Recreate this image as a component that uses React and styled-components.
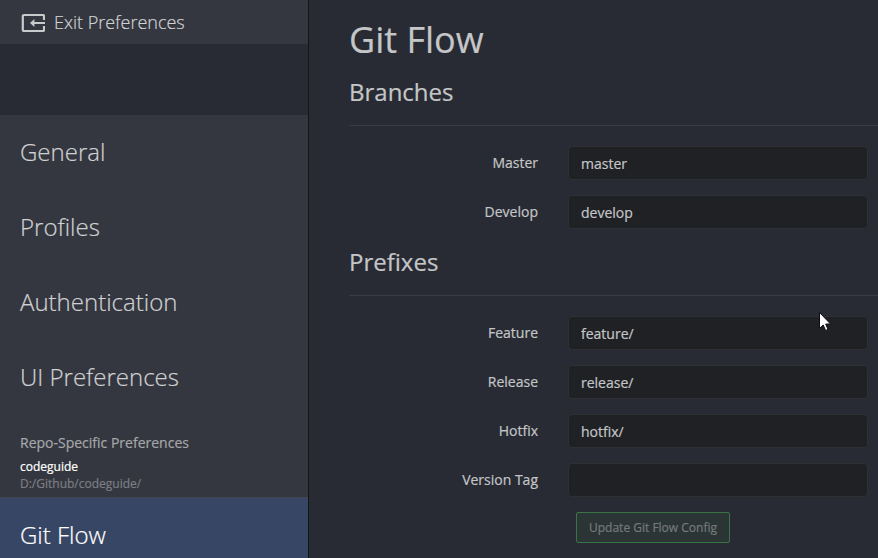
import React from "react";
import styled, { createGlobalStyle } from "styled-components";

const GlobalStyle = createGlobalStyle`
  *, *::before, *::after { box-sizing: border-box; }
  html, body { margin: 0; padding: 0; background: #282b33; overflow: hidden; }
  body {
    font-family: "Open Sans", "Noto Sans", sans-serif;
    font-size: 14px;
    color: #c4c6c8;
    -webkit-text-stroke: 0.2px;
  }
  h1, h2, p { margin: 0; }
`;

const Page = styled.div`
  position: relative;
  display: flex;
  width: 878px;
  height: 558px;
  overflow: hidden;
  background: #282b33;
`;

const Sidebar = styled.aside`
  flex: 0 0 309px;
  display: flex;
  flex-direction: column;
  background: #34373f;
  border-right: 1px solid #141519;
`;

const ExitBar = styled.div`
  flex: 0 0 44px;
  display: flex;
  align-items: center;
  gap: 9px;
  padding-left: 21px;
  font-size: 18px;
  font-weight: 300;
  line-height: 44px;
  color: #d0d1d3;
`;

const Spacer = styled.div`
  flex: 0 0 71px;
  background: #282b33;
`;

const NavItem = styled.div`
  flex: 0 0 75px;
  padding-left: 20px;
  font-size: 24px;
  font-weight: 300;
  line-height: ${(p) => (p.$active ? 75 : 73)}px;
  color: ${(p) => (p.$active ? "#ffffff" : "#d0d1d3")};
  background: ${(p) => (p.$active ? "#384665" : "transparent")};
  box-shadow: ${(p) => (p.$active ? "inset 0 1px #41454f" : "none")};
`;

const RepoSection = styled.div`
  flex: 0 0 82px;
  padding: 18px 0 0 20px;
`;

const RepoHeading = styled.p`
  font-size: 14px;
  line-height: 20px;
  color: #a5a7ab;
`;

const RepoName = styled.p`
  margin-top: 5px;
  font-size: 12px;
  line-height: 17px;
  color: #ffffff;
`;

const RepoPath = styled.p`
  font-size: 12px;
  line-height: 17px;
  color: #7c7e84;
`;

const Content = styled.main`
  flex: 1;
  min-width: 0;
  padding: 20px 0 0 40px;
`;

const Title = styled.h1`
  font-size: 36px;
  font-weight: 400;
  line-height: 40px;
`;

const Section = styled.section`
  margin-top: ${(p) => p.$gap}px;
`;

const SectionTitle = styled.h2`
  height: 47px;
  font-size: 24px;
  font-weight: 400;
  line-height: 25px;
  border-bottom: 1px solid #393c43;
`;

const Fields = styled.div`
  display: flex;
  flex-direction: column;
  gap: 15px;
  padding-top: 20px;
`;

const Field = styled.label`
  display: grid;
  grid-template-columns: 189px 300px;
  column-gap: 30px;
  height: 34px;
`;

const FieldLabel = styled.span`
  text-align: right;
  line-height: 34px;
`;

const Input = styled.input`
  width: 300px;
  height: 34px;
  padding: 1px 12px 0;
  border: 1px solid #2e3034;
  border-radius: 4px;
  outline: none;
  background: #202125;
  color: #c4c6c8;
  font: inherit;
  -webkit-text-stroke: 0.2px;
`;

const Actions = styled.div`
  padding: 15px 0 0 227px;
`;

const UpdateButton = styled.button`
  display: block;
  width: 154px;
  height: 31px;
  padding: 0;
  border: 1px solid #397444;
  border-radius: 2px;
  background: #2c3535;
  color: #757a7b;
  font: 12px/29px "Open Sans", sans-serif;
  white-space: nowrap;
`;

const Pointer = styled.svg`
  position: absolute;
  left: 819px;
  top: 312px;
`;

const ExitIcon = () => (
  <svg width="24" height="20" viewBox="0 0 24 20" fill="none">
    <path d="M23 8V4Q23 3 22 3H3Q1.8 3 1.8 4V18Q1.8 19 3 19H22Q23 19 23 18V14" stroke="#c9cacc" strokeWidth="2.2" />
    <path d="M9 11L13.4 7V10H24V12H13.4V15Z" fill="#c9cacc" />
  </svg>
);

const NAV = ["General", "Profiles", "Authentication", "UI Preferences"];

const BRANCHES = [
  ["Master", "master"],
  ["Develop", "develop"],
];

const PREFIXES = [
  ["Feature", "feature/"],
  ["Release", "release/"],
  ["Hotfix", "hotfix/"],
  ["Version Tag", ""],
];

const FieldList = ({ items }) => (
  <Fields>
    {items.map(([label, value]) => (
      <Field key={label}>
        <FieldLabel>{label}</FieldLabel>
        <Input defaultValue={value} spellCheck={false} />
      </Field>
    ))}
  </Fields>
);

export default function App() {
  return (
    <>
      <GlobalStyle />
      <Page>
        <Sidebar>
          <ExitBar>
            <ExitIcon />
            <span>Exit Preferences</span>
          </ExitBar>
          <Spacer />
          {NAV.map((name) => (
            <NavItem key={name}>{name}</NavItem>
          ))}
          <RepoSection>
            <RepoHeading>Repo-Specific Preferences</RepoHeading>
            <RepoName>codeguide</RepoName>
            <RepoPath>D:/Github/codeguide/</RepoPath>
          </RepoSection>
          <NavItem $active>Git Flow</NavItem>
        </Sidebar>
        <Content>
          <Title>Git Flow</Title>
          <Section $gap={19}>
            <SectionTitle>Branches</SectionTitle>
            <FieldList items={BRANCHES} />
          </Section>
          <Section $gap={20}>
            <SectionTitle>Prefixes</SectionTitle>
            <FieldList items={PREFIXES} />
          </Section>
          <Actions>
            <UpdateButton>Update Git Flow Config</UpdateButton>
          </Actions>
        </Content>
        <Pointer width="12" height="20" viewBox="0 0 12 20">
          <path
            d="M.5 .5V16.5L4.2 13L6.6 18.5L9 17.5L6.7 12H11.6Z"
            fill="#fff"
            stroke="#0b0b14"
            strokeWidth="1"
          />
        </Pointer>
      </Page>
    </>
  );
}
